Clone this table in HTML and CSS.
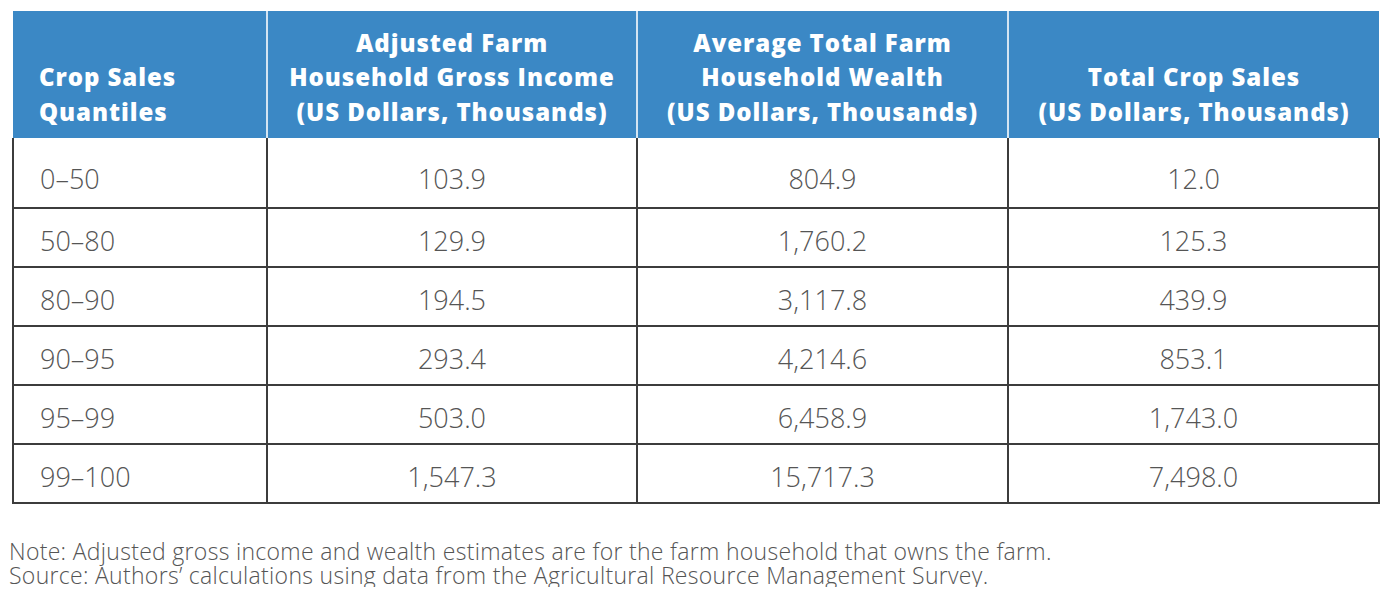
FILE: index.html
```html
<!DOCTYPE html>
<html lang="en">
<head>
<meta charset="utf-8">
<title>Crop Sales Quantiles</title>
<link rel="stylesheet" href="styles.css">
</head>
<body>
<div class="page">
  <table class="data">
    <colgroup>
      <col class="c1"><col class="c2"><col class="c3"><col class="c4">
    </colgroup>
    <thead>
      <tr>
        <th class="first">Crop Sales<br>Quantiles</th>
        <th>Adjusted Farm<br>Household Gross Income<br>(US Dollars, Thousands)</th>
        <th>Average Total Farm<br>Household Wealth<br>(US Dollars, Thousands)</th>
        <th>Total Crop Sales<br>(US Dollars, Thousands)</th>
      </tr>
    </thead>
    <tbody>
      <tr class="r-first"><td class="first">0–50</td><td>103.9</td><td>804.9</td><td>12.0</td></tr>
      <tr><td class="first">50–80</td><td>129.9</td><td>1,760.2</td><td>125.3</td></tr>
      <tr><td class="first">80–90</td><td>194.5</td><td>3,117.8</td><td>439.9</td></tr>
      <tr><td class="first">90–95</td><td>293.4</td><td>4,214.6</td><td>853.1</td></tr>
      <tr><td class="first">95–99</td><td>503.0</td><td>6,458.9</td><td>1,743.0</td></tr>
      <tr><td class="first">99–100</td><td>1,547.3</td><td>15,717.3</td><td>7,498.0</td></tr>
    </tbody>
  </table>
  <div class="notes">
    <p class="note-line">Note: Adjusted gross income and wealth estimates are for the farm household that owns the farm.</p>
    <p class="note-line">Source: Authors’ calculations using data from the Agricultural Resource Management Survey.</p>
  </div>
</div>
</body>
</html>
```

FILE: styles.css
```css
html, body {
  margin: 0;
  padding: 0;
  background: #ffffff;
}

.page {
  padding: 11px 0 0 12px;
  font-family: "Open Sans", "Lato", "Liberation Sans", sans-serif;
}

.data {
  border-collapse: collapse;
  table-layout: fixed;
  width: 1366px;
}

.c1 { width: 254px; }
.c2 { width: 370px; }
.c3 { width: 371px; }
.c4 { width: 371px; }

.data th {
  background: #3b88c5;
  color: #ffffff;
  font-weight: 800;
  font-size: 24px;
  letter-spacing: 0.95px;
  line-height: 34.5px;
  height: 127px;
  padding: 0 0 9px 0;
  vertical-align: bottom;
  text-align: center;
  border-left: 2px solid #d3e4f2;
  border-top: 0;
  box-sizing: border-box;
}

.data th:first-child {
  border-left: 0;
}

.data th.first {
  text-align: left;
  padding-left: 26px;
}

.data td {
  border: 2px solid #3c3c3c;
  color: #555555;
  font-weight: 300;
  font-size: 27px;
  line-height: 30px;
  height: 59px;
  padding: 7px 0 0 0;
  vertical-align: middle;
  text-align: center;
  box-sizing: border-box;
}

.data tbody tr.r-first td {
  border-top: 0;
  height: 70px;
  padding-top: 12px;
}

.data td.first {
  text-align: left;
  padding-left: 26px;
}

.notes {
  margin: 36px 0 0 -3px;
  color: #555555;
  font-weight: 300;
  font-size: 23px;
  letter-spacing: 0.3px;
}

.note-line {
  margin: 0;
  line-height: 23.5px;
  height: 23.5px;
  white-space: nowrap;
}
```
